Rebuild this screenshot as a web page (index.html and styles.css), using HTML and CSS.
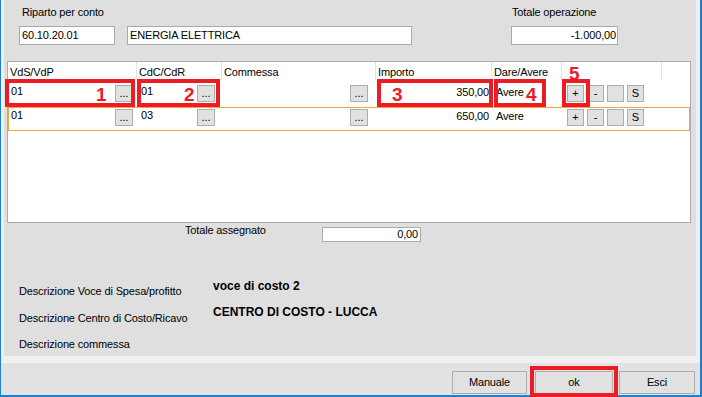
FILE: index.html
```html
<!DOCTYPE html>
<html lang="it">
<head>
    <meta charset="UTF-8">
    <title>Riparto per conto</title>
    <link rel="stylesheet" href="styles.css">
</head>
<body>
    <div class="window">
        <div class="panel">
            <div class="top">
                <div class="group">
                    <div class="label">Riparto per conto</div>
                    <div class="inputs">
                        <div class="textbox code">60.10.20.01</div>
                        <div class="textbox name">ENERGIA ELETTRICA</div>
                    </div>
                </div>
                <div class="group total-op">
                    <div class="label">Totale operazione</div>
                    <div class="inputs">
                        <div class="textbox amount">-1.000,00</div>
                    </div>
                </div>
            </div>

            <div class="grid">
                <div class="grid-head">
                    <div class="hcell c1">VdS/VdP</div>
                    <div class="hcell c2">CdC/CdR</div>
                    <div class="hcell c3">Commessa</div>
                    <div class="hcell c4">Importo</div>
                    <div class="hcell c5">Dare/Avere</div>
                    <div class="hcell c6"></div>
                    <div class="hcell c7"></div>
                </div>
                <div class="grid-row">
                    <div class="cell c1 pick"><span class="val">01</span><span class="dots">...</span></div>
                    <div class="cell c2 pick"><span class="val">01</span><span class="dots">...</span></div>
                    <div class="cell c3 pick"><span class="val"></span><span class="dots">...</span></div>
                    <div class="cell c4 imp">350,00</div>
                    <div class="cell c5 dare">Avere</div>
                    <div class="cell c6 act"><span class="sbtn">+</span><span class="sbtn">-</span><span class="sbtn"></span><span class="sbtn">S</span></div>
                </div>
                <div class="grid-row selected">
                    <div class="cell c1 pick"><span class="val">01</span><span class="dots">...</span></div>
                    <div class="cell c2 pick"><span class="val">03</span><span class="dots">...</span></div>
                    <div class="cell c3 pick"><span class="val"></span><span class="dots">...</span></div>
                    <div class="cell c4 imp">650,00</div>
                    <div class="cell c5 dare">Avere</div>
                    <div class="cell c6 act"><span class="sbtn">+</span><span class="sbtn">-</span><span class="sbtn"></span><span class="sbtn">S</span></div>
                </div>
            </div>

            <div class="total">
                <div class="total-label">Totale assegnato</div>
                <div class="textbox small">0,00</div>
            </div>

            <div class="desc">
                <div class="desc-labels">
                    <div class="dlabel">Descrizione Voce di Spesa/profitto</div>
                    <div class="dlabel">Descrizione Centro di Costo/Ricavo</div>
                    <div class="dlabel">Descrizione commessa</div>
                </div>
                <div class="desc-values">
                    <div class="dvalue">voce di costo 2</div>
                    <div class="dvalue">CENTRO DI COSTO - LUCCA</div>
                </div>
            </div>
        </div>

        <div class="buttonbar">
            <div class="btn manuale">Manuale</div>
            <div class="btn ok">ok</div>
            <div class="btn esci">Esci</div>
        </div>

        <!-- red annotations drawn over the dialog -->
        <div class="mark m1"></div>
        <div class="mark m2"></div>
        <div class="mark m3"></div>
        <div class="mark m4"></div>
        <div class="mark m5"></div>
        <div class="mark mok"></div>
        <div class="tag t1">1</div>
        <div class="tag t2">2</div>
        <div class="tag t3">3</div>
        <div class="tag t4">4</div>
        <div class="tag t5">5</div>
    </div>
</body>
</html>
```

FILE: styles.css
```css
* { box-sizing: border-box; }
body { margin: 0; font-family: "Liberation Sans", Arial, sans-serif; font-size: 11px; letter-spacing: -0.15px; color: #000; }

.window { position: relative; width: 702px; height: 397px; background: #f0f0f0; border-left: 1px solid #1c7fd1; border-right: 2px solid #1c7fd1; border-bottom: 2px solid #1c7fd1; display: flex; flex-direction: column; }
.panel { flex-shrink: 0; height: 356px; margin: 0 4px 0 3px; background: #dfdfdf; display: flex; flex-direction: column; }
.panel > * { flex-shrink: 0; }

.top { display: flex; padding: 6px 0 0 15px; line-height: 13px; }
.label { height: 13px; padding-left: 3px; }
.total-op { margin-left: 99px; }
.total-op .label { padding-left: 1px; }
.inputs { display: flex; gap: 12px; margin-top: 7px; }
.textbox { height: 19px; background: #fff; border: 1px solid #aaaaaa; padding: 2px 2px 0; line-height: 13px; white-space: nowrap; }
.code { width: 96px; }
.name { width: 285px; }
.amount { width: 107px; text-align: right; padding-right: 1px; }

.grid { position: relative; margin: 16px 0 0 3px; width: 684px; height: 162px; background: #fff; border: 1px solid #acacac; line-height: 13px; }
.grid-head { display: flex; height: 21px; }
.hcell { height: 18px; padding: 4px 0 0 2px; border-right: 1px solid #e4e4e4; }
.c1 { width: 129px; }
.c2 { width: 85px; }
.c3 { width: 154px; }
.c4 { width: 116px; }
.c5 { width: 70px; }
.c6 { width: 100px; }
.c7 { flex: 1; border-right: none; }

.grid-row { display: flex; height: 24px; }
.grid-row.selected { outline: 1px solid #f5a540; outline-offset: -1px; }
.cell { display: flex; align-items: flex-start; }
.pick { padding-top: 2px; }
.cell.c1 { padding-left: 3px; padding-right: 4px; }
.cell.c2 { padding-left: 4px; padding-right: 7px; }
.cell.c3 { padding-right: 8px; }
.val { flex: 1; }
.dots { width: 18px; height: 17px; background: #e1e1e1; border: 1px solid #adadad; text-align: center; line-height: 15px; letter-spacing: 0; }
.imp { justify-content: flex-end; padding: 3px 3px 0 0; }
.dare { padding: 3px 0 0 4px; }
.act { padding: 2px 0 0 5px; gap: 3px; }
.sbtn { width: 17px; height: 17px; background: #e1e1e1; border: 1px solid #adadad; text-align: center; line-height: 15px; letter-spacing: 0; }

.total { display: flex; margin: 1px 0 0 181px; line-height: 13px; }
.total-label { width: 137px; }
.textbox.small { width: 99px; height: 15px; margin-top: 3px; padding: 0 2px 0 0; text-align: right; }

.desc { display: flex; margin-top: 36px; padding-left: 15px; }
.desc-labels { width: 194px; padding-top: 7px; line-height: 13px; }
.dlabel { margin-bottom: 13.5px; }
.dlabel:last-child { margin-bottom: 0; }
.desc-values { padding-top: 1px; font-weight: bold; font-size: 12px; line-height: 14px; letter-spacing: 0; }
.dvalue { margin-bottom: 12px; }

.buttonbar { flex-shrink: 0; margin-top: 7px; height: 32px; background: #e2e2e2; display: flex; justify-content: flex-end; padding: 8px 5px 0 0; }
.btn { height: 23px; background: #e1e1e1; border: 1px solid #adadad; text-align: center; line-height: 21px; }
.manuale { width: 75px; }
.ok { width: 78px; margin-left: 8px; }
.esci { width: 76px; margin-left: 6px; }

.mark { position: absolute; border: 4px solid #ec1c24; }
.m1 { left: 4px; top: 79px; width: 130px; height: 28px; }
.m2 { left: 136px; top: 79px; width: 83px; height: 28px; }
.m3 { left: 376px; top: 79px; width: 116px; height: 28px; }
.m4 { left: 493px; top: 79px; width: 52px; height: 28px; }
.m5 { left: 561px; top: 79px; width: 28px; height: 28px; }
.mok { left: 529px; top: 366px; width: 88px; height: 31px; }

.tag { position: absolute; font-weight: bold; font-size: 19px; line-height: 19px; letter-spacing: 0; color: #ec1c24; }
.t1 { left: 95px; top: 85px; }
.t2 { left: 183px; top: 85px; }
.t3 { left: 391px; top: 85px; }
.t4 { left: 525px; top: 85px; }
.t5 { left: 568px; top: 64px; }
```
